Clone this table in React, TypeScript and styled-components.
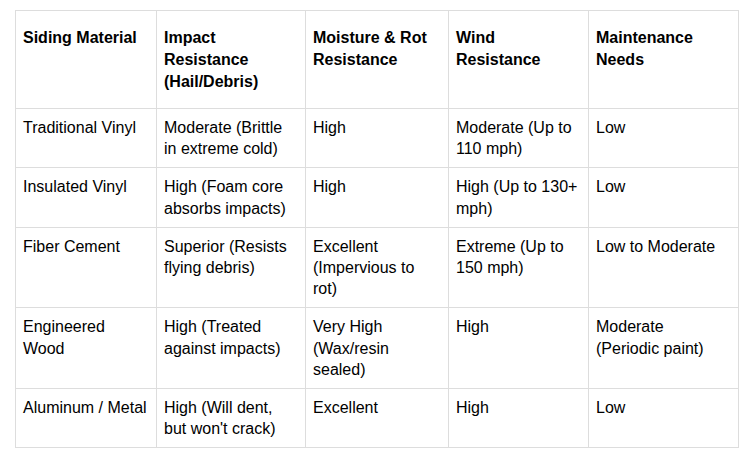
import React from "react";
import styled, { createGlobalStyle } from "styled-components";

const Global = createGlobalStyle`
  html, body { margin: 0; padding: 0; background: #ffffff; }
  body { font-family: "Liberation Sans", Arial, sans-serif; color: #000000; }
`;

const Page = styled.div`
  padding: 10px 12px 8px 15px;
`;

const Table = styled.table`
  border-collapse: collapse;
  table-layout: fixed;
  width: 724px;
  font-size: 16px;
`;

const HeadCell = styled.th`
  border: 1px solid #dddddd;
  padding: 16px 7px 15px 7px;
  text-align: left;
  vertical-align: top;
  font-weight: bold;
  line-height: 22px;
`;

const Cell = styled.td`
  border: 1px solid #dddddd;
  padding: 8px 7px 7.5px 7px;
  text-align: left;
  vertical-align: top;
  line-height: 21.4px;
`;

const widths = [141, 149, 143, 140, 150];

const headers = [
  "Siding Material",
  "Impact Resistance (Hail/Debris)",
  "Moisture & Rot Resistance",
  "Wind Resistance",
  "Maintenance Needs",
];

const rows: string[][] = [
  ["Traditional Vinyl", "Moderate (Brittle in extreme cold)", "High", "Moderate (Up to 110 mph)", "Low"],
  ["Insulated Vinyl", "High (Foam core absorbs impacts)", "High", "High (Up to 130+ mph)", "Low"],
  ["Fiber Cement", "Superior (Resists flying debris)", "Excellent (Impervious to rot)", "Extreme (Up to 150 mph)", "Low to Moderate"],
  ["Engineered Wood", "High (Treated against impacts)", "Very High (Wax/resin sealed)", "High", "Moderate (Periodic paint)"],
  ["Aluminum / Metal", "High (Will dent, but won't crack)", "Excellent", "High", "Low"],
];

export default function App() {
  return (
    <>
      <Global />
      <Page>
        <Table>
          <colgroup>
            {widths.map((w, i) => (
              <col key={i} style={{ width: w }} />
            ))}
          </colgroup>
          <thead>
            <tr>
              {headers.map((h) => (
                <HeadCell key={h}>{h}</HeadCell>
              ))}
            </tr>
          </thead>
          <tbody>
            {rows.map((r) => (
              <tr key={r[0]}>
                {r.map((c, i) => (
                  <Cell key={i}>{c}</Cell>
                ))}
              </tr>
            ))}
          </tbody>
        </Table>
      </Page>
    </>
  );
}
